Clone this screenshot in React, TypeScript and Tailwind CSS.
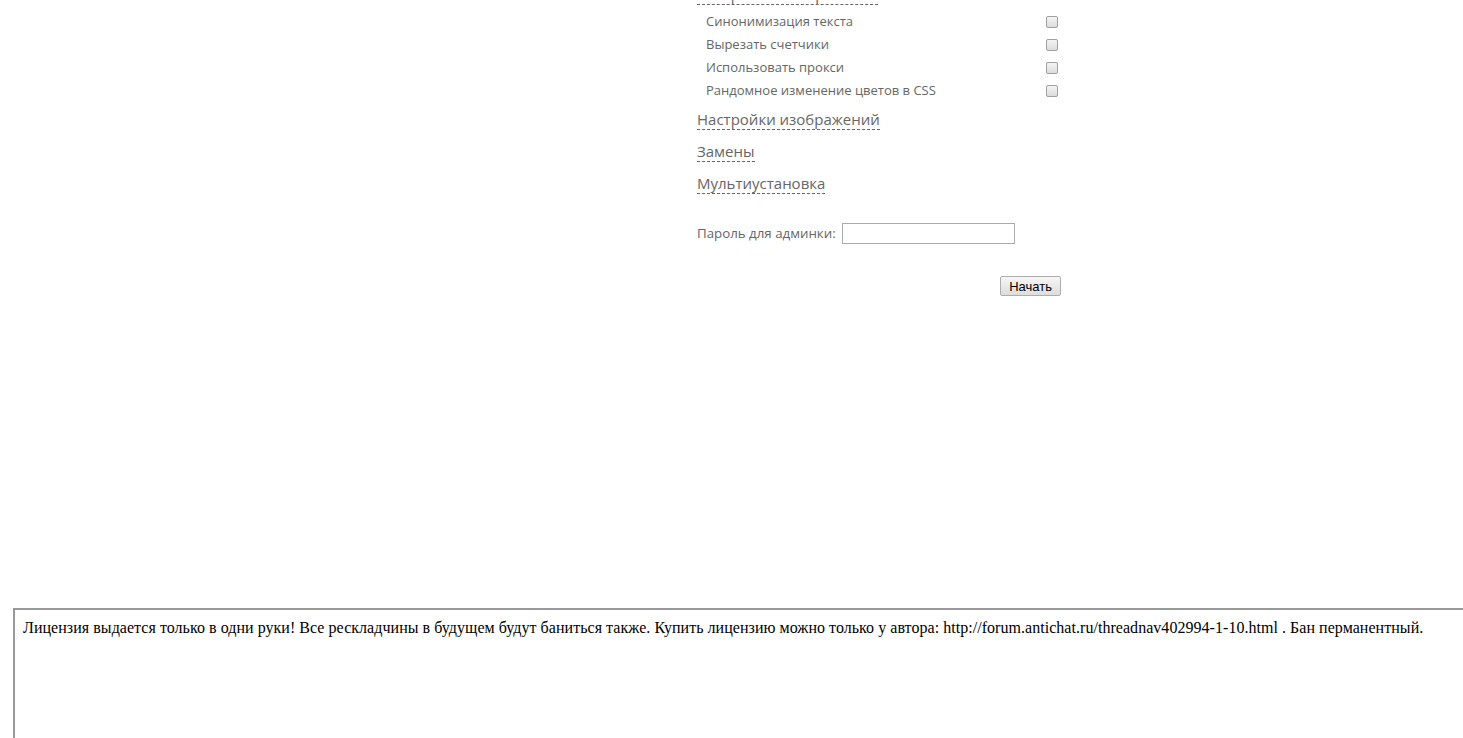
import React from 'react';

const OPTIONS = [
  'Синонимизация текста',
  'Вырезать счетчики',
  'Использовать прокси',
  'Рандомное изменение цветов в CSS',
];

const SECTIONS = ['Настройки изображений', 'Замены', 'Мультиустановка'];

export default function App() {
  return (
    <div className="h-[738px] overflow-hidden bg-white font-['Open_Sans',sans-serif]">
      <div className="ml-[697px] w-[364px] -mt-[22px]">
        {/* cut-off heading, page is scrolled */}
        <div className="h-[32px] flex items-center">
          <span className="text-[15px] text-[#666] border-b border-dashed border-[#666] leading-[20px]">
            Настройки копирования
          </span>
        </div>

        <div className="pl-[9px] flex flex-col">
          {OPTIONS.map(label => (
            <label key={label} className="h-[23px] flex items-center justify-between text-[13px] text-[#666]">
              <span>{label}</span>
              <input
                type="checkbox"
                className="appearance-none w-[12px] h-[12px] mr-[3px] border border-[#a0a0a0] rounded-[2px] bg-gradient-to-b from-[#f4f4f4] to-[#dcdcdc]"
              />
            </label>
          ))}
        </div>

        <div className="flex flex-col mt-[1px]">
          {SECTIONS.map(s => (
            <div key={s} className="h-[32px] flex items-center">
              <span className="text-[15px] text-[#666] border-b border-dashed border-[#666] leading-[20px]">
                {s}
              </span>
            </div>
          ))}
        </div>

        <div className="mt-[24px] flex items-center gap-[6px] text-[13.3px] text-[#666]">
          <span>Пароль для админки:</span>
          <input type="text" className="w-[173px] h-[21px] border border-[#aaa] bg-white" />
        </div>

        <div className="mt-[32px] flex justify-end">
          <button className="h-[20px] px-[8px] text-[13px] text-black border border-[#adadad] rounded-[2px] bg-gradient-to-b from-[#f6f6f6] to-[#dddddd] font-['Liberation_Sans',sans-serif]">
            Начать
          </button>
        </div>
      </div>

      <div className="mt-[312px] ml-[13px] w-[1470px] h-[200px] border-2 border-[#999] px-[8px] py-[8px] font-['Liberation_Serif',serif] text-[16px] tracking-[0.04px] text-black leading-[20px]">
        Лицензия выдается только в одни руки! Все рескладчины в будущем будут баниться также. Купить лицензию можно только у автора: http://forum.antichat.ru/threadnav402994-1-10.html . Бан перманентный.
      </div>
    </div>
  );
}
